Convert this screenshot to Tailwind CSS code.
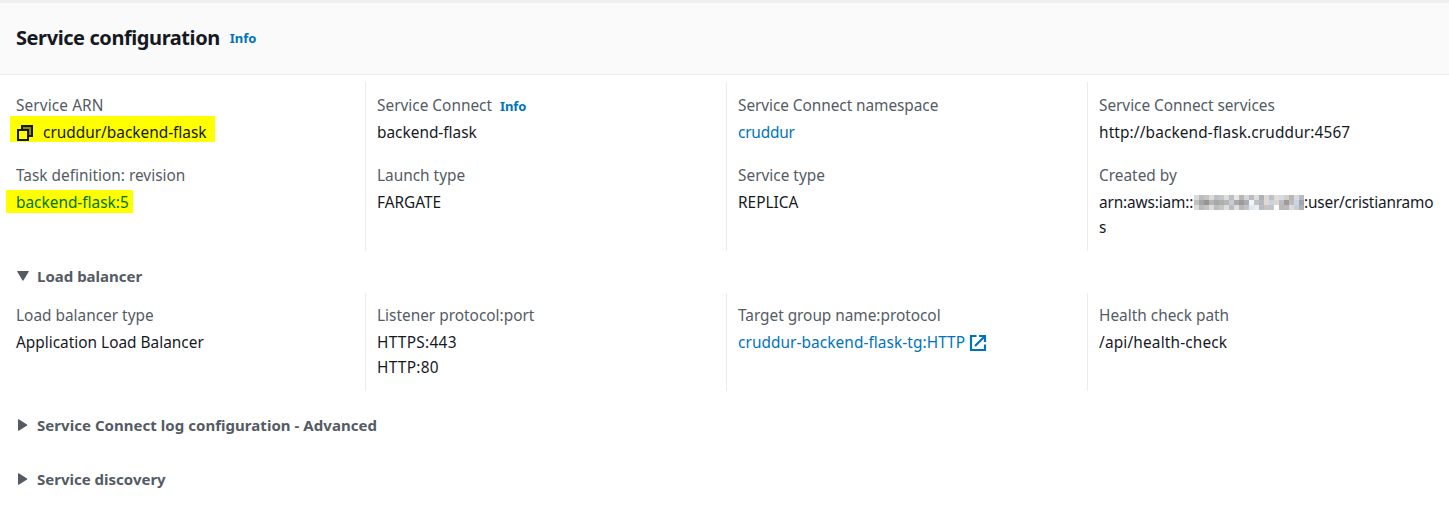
<!DOCTYPE html>
<html lang="en">
<head>
<meta charset="utf-8">
<title>Service configuration</title>
<script src="https://cdn.jsdelivr.net/npm/@tailwindcss/browser@4"></script>
</head>
<body class="h-[512px] overflow-hidden bg-white font-['Noto_Sans',sans-serif] text-[15.4px] leading-[25px] text-[#16191f]">
<header class="flex h-[75px] items-center gap-[10px] border-t-[3px] border-b border-t-[#eeefef] border-b-[#eaeded] bg-[#fafafa] px-4 pb-[3px]">
  <h2 class="text-[20px] font-bold tracking-[-0.42px]">Service configuration</h2>
  <a class="pt-[3px] text-[13px] font-bold text-[#0073bb]">Info</a>
</header>
<main class="pt-[7px]">
  <section class="grid h-[169px] grid-cols-[365px_361px_361px_1fr]">
    <div class="flex flex-col gap-[18px] pl-4 pt-[11px]">
      <div class="flex h-[52px] flex-col gap-[2px]">
        <div class="text-[#545b64]"><span class="tracking-[0.1px]">Service ARN</span></div>
        <div class="-ml-[6px] -mt-[4px] flex h-[26px] w-[205px] shrink-0 items-start bg-[#ffff00] pl-[6px] text-[#16190a]">
          <svg class="mr-[9px] mt-[8px] h-[18px] w-[18px]" viewBox="0 0 18 18" fill="none" stroke="currentColor" stroke-width="2"><path fill="#8c8c00" d="M6 6V2h10v10h-4V6Z"/><path d="M2 6h10v10H2z"/></svg>
          <span class="mt-[4px]">cruddur/backend-flask</span>
        </div>
      </div>
      <div class="flex h-[52px] flex-col gap-[2px]">
        <div class="text-[#545b64]"><span>Task definition: revision</span></div>
        <div class="-ml-[10px] flex h-[23px] w-[127px] items-center bg-[#ffff00] pl-[10px] pt-px text-[#007300]"><span>backend-flask:5</span></div>
      </div>
    </div>
    <div class="flex flex-col gap-[18px] border-l border-[#eaeded] pl-[11px] pt-[11px]">
      <div class="flex flex-col gap-[2px]">
        <div class="flex gap-2 text-[#545b64]"><span>Service Connect</span><a class="pt-px text-[13px] font-bold tracking-[-0.1px] text-[#0073bb]">Info</a></div>
        <div class="-mt-px"><span>backend-flask</span></div>
      </div>
      <div class="flex flex-col gap-[2px]">
        <div class="text-[#545b64]"><span>Launch type</span></div>
        <div><span>FARGATE</span></div>
      </div>
    </div>
    <div class="flex flex-col gap-[18px] border-l border-[#eaeded] pl-[11px] pt-[11px]">
      <div class="flex flex-col gap-[2px]">
        <div class="text-[#545b64]"><span class="tracking-[-0.06px]">Service Connect namespace</span></div>
        <div><a class="tracking-[-0.2px] text-[#0073bb]">cruddur</a></div>
      </div>
      <div class="flex flex-col gap-[2px]">
        <div class="text-[#545b64]"><span>Service type</span></div>
        <div><span>REPLICA</span></div>
      </div>
    </div>
    <div class="flex flex-col gap-[18px] border-l border-[#eaeded] pl-[11px] pt-[11px]">
      <div class="flex flex-col gap-[2px]">
        <div class="text-[#545b64]"><span class="tracking-[-0.04px]">Service Connect services</span></div>
        <div><span class="tracking-[0.13px]">http://backend-flask.cruddur:4567</span></div>
      </div>
      <div class="flex flex-col gap-[2px]">
        <div class="text-[#545b64]"><span>Created by</span></div>
        <div>
          <div class="flex items-center whitespace-nowrap"><span class="w-[95px] tracking-[-0.15px]">arn:aws:iam::</span>
          <svg id="redacted" class="h-[15px] w-[110px] shrink-0" viewBox="0 0 22 3" shape-rendering="crispEdges"></svg><span class="tracking-[-0.2px]">:user/cristianramo</span></div>
          <div>s</div>
        </div>
      </div>
    </div>
  </section>
  <div class="flex h-[42px] items-center gap-2 pl-[17px] pt-[8px] text-[15px] font-bold text-[#545b64]">
    <svg class="-mt-px h-[10px] w-[12px]" viewBox="0 0 12 10"><path fill="currentColor" d="M.7 0h10.6q.8 0 .4.8L6.6 9.3q-.6.8-1.2 0L.3.8Q-.1 0 .7 0Z"/></svg>
    <span>Load balancer</span>
  </div>
  <section class="grid h-[98px] grid-cols-[365px_361px_361px_1fr]">
    <div class="flex flex-col gap-[2px] pl-4 pt-[10px]">
      <div class="text-[#545b64]"><span>Load balancer type</span></div>
      <div><span>Application Load Balancer</span></div>
    </div>
    <div class="flex flex-col gap-[2px] border-l border-[#eaeded] pl-[11px] pt-[10px]">
      <div class="text-[#545b64]"><span>Listener protocol:port</span></div>
      <div><div><span class="tracking-[0.3px]">HTTPS:443</span></div><div><span class="tracking-[0.3px]">HTTP:80</span></div></div>
    </div>
    <div class="flex flex-col gap-[2px] border-l border-[#eaeded] pl-[11px] pt-[10px]">
      <div class="text-[#545b64]"><span class="tracking-[-0.03px]">Target group name:protocol</span></div>
      <div class="flex items-center gap-1 text-[#0073bb]"><span class="tracking-[0.07px]">cruddur-backend-flask-tg:HTTP</span>
        <svg class="h-[18px] w-[18px]" viewBox="0 0 18 18" fill="none" stroke="currentColor" stroke-width="2.2"><path d="M7.5 2H2v14h14v-5.5M10 2h6v6M16 2 6 12"/></svg>
      </div>
    </div>
    <div class="flex flex-col gap-[2px] border-l border-[#eaeded] pl-[11px] pt-[10px]">
      <div class="text-[#545b64]"><span>Health check path</span></div>
      <div><span class="tracking-[0.16px]">/api/health-check</span></div>
    </div>
  </section>
  <div class="flex flex-col gap-[29px] pt-[22px] pl-[18px] text-[15px] font-bold text-[#545b64]">
    <div class="flex items-center gap-[9px]">
      <svg class="-mt-px h-[12px] w-[10px]" viewBox="0 0 10 12"><path fill="currentColor" d="M0 .9Q0 0 .8.3L9 5.4q.8.6 0 1.2L.8 11.7Q0 12 0 11.1Z"/></svg>
      <span class="tracking-[0.04px]">Service Connect log configuration - Advanced</span>
    </div>
    <div class="flex items-center gap-[9px]">
      <svg class="-mt-px h-[12px] w-[10px]" viewBox="0 0 10 12"><path fill="currentColor" d="M0 .9Q0 0 .8.3L9 5.4q.8.6 0 1.2L.8 11.7Q0 12 0 11.1Z"/></svg>
      <span>Service discovery</span>
    </div>
  </div>
</main>
<script>
  // Pixelated mask over the account id: three rows of 22 cells.
  const rows = [
    "dddad6 bcbcbe c6c4c3 dcdbda bcc0c5 c5c6c8 dddddd bebebf e5e6e8 b8b6b5 d6d6d9 b9bcc1 dddddd adb1b8 dcd9d6 bcc0c7 e1dcd6 d2dbe6 d2cdc8 bab6b1 dadada b9bbbe",
    "c2c1c2 a5a4a8 97918f b4b4b6 a3a7ae b0adad b5b6ba c5ccd6 aaa9ab 9d9a99 a9acb3 eff6fb c3c1c0 b5b8bf e1d9d1 c5d3e3 e0d4c8 b9bcc4 a49a91 b9bcc3 cad5e5 a0a4ab",
    "dbdbdb b9babd c5c2c0 dcdcdd bcbcbf c6c5c4 dddedf bbbcbf dedfe1 b8b8ba c3c3c4 dee8ef e2f0f9 b9bbc0 c7c5c4 c0c5cc fdfdfe bdb8b3 b9babe dadada c9cdd4 b0b0b2"
  ];
  document.getElementById("redacted").innerHTML = rows.map((r, y) =>
    r.split(" ").map((c, x) => `<rect x="${x}" y="${y}" width="1" height="1" fill="#${c}"/>`).join("")).join("");
</script>
</body>
</html>
